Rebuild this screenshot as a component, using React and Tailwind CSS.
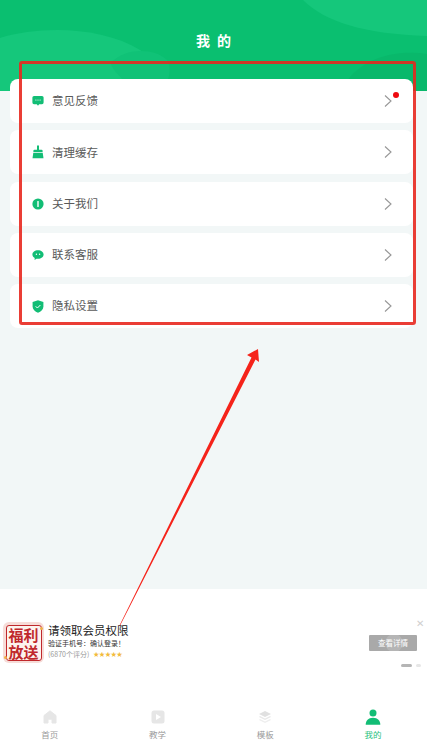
import React from "react";

const cjk = { fontFamily: '"Noto Sans CJK SC", "Noto Sans", sans-serif' };

const Chevron = () => (
  <svg width="10" height="14" viewBox="0 0 10 14" fill="none" stroke="#979797" strokeWidth="1.1">
    <path d="M2 1.5 L8 7 L2 12.5" />
  </svg>
);

const G = "#12bd75";

const icons = [
  <svg key="a" width="12" height="12" viewBox="0 0 12 12">
    <path d="M2 1h8a1.6 1.6 0 0 1 1.6 1.6v5A1.6 1.6 0 0 1 10 9.2H7.2L6 10.8 4.8 9.2H2A1.6 1.6 0 0 1 .4 7.6v-5A1.6 1.6 0 0 1 2 1z" fill={G} />
    <circle cx="3.9" cy="5" r=".6" fill="#fff" /><circle cx="6" cy="5" r=".6" fill="#fff" /><circle cx="8.1" cy="5" r=".6" fill="#fff" />
  </svg>,
  <svg key="b" width="12" height="14" viewBox="0 0 12 14">
    <path d="M5 .5h2v4.2h2.6a1 1 0 0 1 1 1V7H1.4V5.700a1 1 0 0 1 1-1H5z" fill={G} />
    <path d="M1.300 7.800h9.400l.8 5.400H.5z" fill={G} />
  </svg>,
  <svg key="c" width="12" height="12" viewBox="0 0 12 12">
    <circle cx="6" cy="6" r="5.600" fill={G} />
    <rect x="5.300" y="3" width="1.400" height="6" rx=".6" fill="#fff" />
  </svg>,
  <svg key="d" width="12" height="12" viewBox="0 0 12 12">
    <path d="M6 1.200c3.200 0 5.600 1.900 5.600 4.300S9.200 9.800 6 9.800c-.5 0-1 0-1.500-.1L2.600 11l.1-2.100C1.200 8.100.4 6.900.4 5.500.4 3.100 2.800 1.200 6 1.200z" fill={G} />
    <circle cx="4.400" cy="5.300" r=".7" fill="#fff" /><circle cx="7.600" cy="5.300" r=".7" fill="#fff" />
  </svg>,
  <svg key="e" width="12" height="13" viewBox="0 0 12 13">
    <path d="M6 .3 11.400 2v4.500c0 3-2.300 5-5.400 6.200C2.900 11.500.6 9.500.6 6.500V2z" fill={G} />
    <path d="M3.700 6.300 5.400 8l3-3" fill="none" stroke="#fff" strokeWidth="1" />
  </svg>,
];

const rows = ["意见反馈", "清理缓存", "关于我们", "联系客服", "隐私设置"];

const Row = ({ label, icon, dot }) => (
  <div className="relative flex h-[44px] items-center rounded-lg bg-white pl-[22px] pr-[20px]">
    <span className="flex w-[12px] items-center justify-center">{icon}</span>
    <span className="ml-[8px] flex-1 text-[11.5px] leading-none text-[#5a5a5a]">{label}</span>
    <Chevron />
    {dot && <span className="absolute right-[14px] top-[13px] h-[6px] w-[6px] rounded-full bg-[#ee0a10]" />}
  </div>
);

const Tab = ({ label, active, icon }) => (
  <div className="flex flex-1 flex-col items-center">
    <div className="flex h-[18px] items-center justify-center">{icon}</div>
    <span className={`mt-[1px] text-[8.5px] leading-[14px] ${active ? "text-[#1fbf7c]" : "text-[#9a9a9a]"}`}>{label}</span>
  </div>
);

export default function App() {
  return (
    <div className="relative flex h-[748px] w-[427px] flex-col overflow-hidden bg-[#f2f7f7]" style={cjk}>
      <div className="relative h-[91px] shrink-0 overflow-hidden bg-[#0abf70]">
        <svg className="absolute inset-0" width="427" height="91" viewBox="0 0 427 91">
          <path d="M303 0C325 22 365 34 427 36V0z" fill="#15c77b" />
          <path d="M0 38C40 26 100 26 140 50C175 72 170 91 170 91H0z" fill="#15c77b" />
          <path d="M111 63C125 47 155 48 167 60C173 70 168 85 160 91H130C125 78 112 72 111 63z" fill="#10c277" />
          <path d="M348 80C365 56 400 50 427 54V91H345z" fill="#09b86b" />
        </svg>
        <div className="absolute inset-x-0 top-[31px] pl-[2px] text-center text-[14px] font-bold leading-[18px] tracking-[2px] text-white">我 的</div>
      </div>

      <div className="relative -mt-[12px] flex flex-col gap-[7.25px] pl-[10px] pr-[14px]">
        {rows.map((r, i) => (
          <Row key={r} label={r} icon={icons[i]} dot={i === 0} />
        ))}
      </div>

      <div className="mt-auto h-[159px] shrink-0 bg-white">
        <div className="relative h-[111px]">
          <div className="flex items-start pl-[3px] pt-[33px]">
            <div className="relative flex h-[41px] w-[41px] shrink-0 items-center justify-center rounded-[6px] bg-[#f6dcd8]">
              <div className="flex h-[36px] w-[36px] flex-col items-center justify-center rounded-[3px] border border-[#c0282c] bg-[#fdf3ee] text-[15px] font-bold leading-[17px] text-[#c0282c]">
                <span className="whitespace-nowrap">福利</span>
                <span className="whitespace-nowrap">放送</span>
              </div>
              <span className="absolute right-[1px] top-[5px] h-[3px] w-[3px] rounded-full bg-[#efb04a]" />
              <span className="absolute bottom-[4px] left-[1px] h-[3px] w-[3px] rounded-full bg-[#efb04a]" />
            </div>
            <div className="ml-[4px] flex flex-col pt-[1px]">
              <span className="text-[11.5px] leading-[14px] text-[#222]">请领取会员权限</span>
              <span className="mt-[1px] text-[7px] leading-[10px] text-[#333]">验证手机号：确认登录！</span>
              <div className="mt-[1px] flex items-center gap-[4px] text-[7px] leading-[10px] text-[#999]">
                <span>(6870个评分)</span>
                <span className="text-[6px] leading-[10px] tracking-[-0.2px] text-[#f2bb3c]">★★★★★</span>
              </div>
            </div>
          </div>
          <span className="absolute right-[3px] top-[29px] text-[10px] leading-[10px] text-[#cfcfcf]">✕</span>
          <div className="absolute right-[10px] top-[46px] flex h-[16px] w-[48px] items-center justify-center overflow-hidden rounded-[1px] bg-[#a9a9a9] text-[7.5px] text-white">
            <span className="absolute left-[16px] top-[-1px] h-[18px] w-[18px] rounded-full bg-white/15" />
            <span className="relative">查看详情</span>
          </div>
          <div className="absolute right-[15px] top-[75px] h-[3px] w-[11px] rounded-full bg-[#b5b5b5]" />
          <div className="absolute right-[6px] top-[75px] h-[3px] w-[5px] rounded-full bg-[#e6e6e6]" />
        </div>
        <div className="-ml-[4px] flex h-[48px] w-[431px] pt-[8px]">
          <Tab label="首页" icon={
            <svg width="14" height="14" viewBox="0 0 14 14"><path d="M7 .8 13 5.500V13H9V9.200H5V13H1V5.500z" fill="#e6e6e6" stroke="#e6e6e6" strokeLinejoin="round" /></svg>
          } />
          <Tab label="教学" icon={
            <svg width="14" height="14" viewBox="0 0 14 14"><rect x=".5" y=".5" width="13" height="13" rx="2.500" fill="#e6e6e6" /><path d="M5 4v6l5-3z" fill="#fff" /></svg>
          } />
          <Tab label="模板" icon={
            <svg width="14" height="14" viewBox="0 0 14 14"><path d="M7 1 13 4 7 7 1 4z" fill="#e0e0e0" /><path d="M2 6 7 8.500 12 6l1 1-6 3-6-3z" fill="#e8e8e8" /><path d="M2 9 7 11.500 12 9l1 1-6 3-6-3z" fill="#eeeeee" /></svg>
          } />
          <Tab label="我的" active icon={
            <svg width="16" height="16" viewBox="0 0 16 16"><circle cx="8" cy="4" r="3.500" fill={G} /><path d="M.7 15.800c0-4 2.500-7 7.300-7s7.300 3 7.300 7z" fill={G} /></svg>
          } />
        </div>
      </div>

      <div className="pointer-events-none absolute left-[19px] top-[61px] h-[264px] w-[397px] rounded-[3px] border-[3px] border-[#e8281f]/90" />
      <svg className="pointer-events-none absolute left-0 top-0" width="427" height="748" viewBox="0 0 427 748">
        <path d="M119.500 625.500 251.500 357.500 247 355 258 349 259 362 255.500 359.500 120 625.800z" fill="#f5231a" />
      </svg>
    </div>
  );
}
